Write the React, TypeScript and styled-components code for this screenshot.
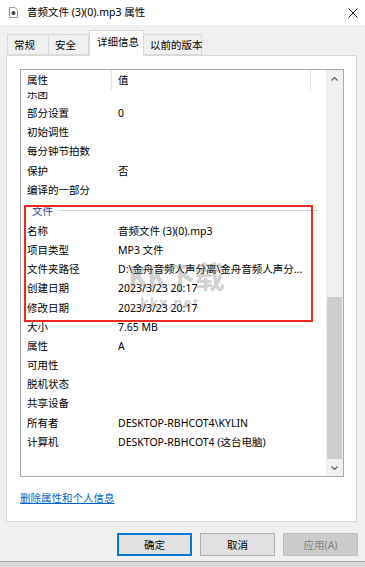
import { FC } from "react";
import styled, { createGlobalStyle } from "styled-components";

const GlobalStyle = createGlobalStyle`
  html, body {
    margin: 0;
    padding: 0;
    background: #f0f0f0;
  }
  body {
    font-family: "Noto Sans", "Noto Sans CJK SC", sans-serif;
    font-size: 10.5px;
    color: #000;
  }
`;

interface Row {
  label: string;
  value?: string;
}

const musicRows: Row[] = [
  { label: "乐团" },
  { label: "部分设置", value: "0" },
  { label: "初始调性" },
  { label: "每分钟节拍数" },
  { label: "保护", value: "否" },
  { label: "编译的一部分" },
];

const fileRows: Row[] = [
  { label: "名称", value: "音频文件 (3)(0).mp3" },
  { label: "项目类型", value: "MP3 文件" },
  { label: "文件夹路径", value: "D:\\金舟音频人声分离\\金舟音频人声分..." },
  { label: "创建日期", value: "2023/3/23 20:17" },
  { label: "修改日期", value: "2023/3/23 20:17" },
  { label: "大小", value: "7.65 MB" },
  { label: "属性", value: "A" },
  { label: "可用性" },
  { label: "脱机状态" },
  { label: "共享设备" },
  { label: "所有者", value: "DESKTOP-RBHCOT4\\KYLIN" },
  { label: "计算机", value: "DESKTOP-RBHCOT4 (这台电脑)" },
];

const tabs = [
  { name: "常规", width: 42 },
  { name: "安全", width: 41 },
  { name: "详细信息", width: 55, active: true },
  { name: "以前的版本", width: 59 },
];

const FileIcon: FC = () => (
  <svg width="9" height="11" viewBox="0 0 9 11">
    <path d="M0.5 0.5 H6 L8.5 3 V10.5 H0.5 Z" fill="#fff" stroke="#9a9a9a" />
    <circle cx="4.5" cy="6" r="2" fill="#3c3c46" />
    <circle cx="4.5" cy="6" r="0.6" fill="#c85050" />
  </svg>
);

const CloseIcon: FC = () => (
  <svg width="10" height="10" viewBox="0 0 10 10">
    <path d="M0.5 0.5 L9.5 9.5 M9.5 0.5 L0.5 9.5" stroke="#111" strokeWidth="1" />
  </svg>
);

const Chevron: FC<{ up?: boolean }> = ({ up }) => (
  <svg width="7" height="4" viewBox="0 0 7 4">
    <path
      d={up ? "M0.5 3.5 L3.5 0.5 L6.5 3.5" : "M0.5 0.5 L3.5 3.5 L6.5 0.5"}
      fill="none"
      stroke="#606060"
      strokeWidth="1.2"
    />
  </svg>
);

const DetailRow: FC<Row> = ({ label, value }) => (
  <ListRow>
    <Cell>{label}</Cell>
    <Cell>{value}</Cell>
  </ListRow>
);

const App: FC = () => {
  return (
    <Window>
      <GlobalStyle />
      <TitleBar>
        <TitleIcon>
          <FileIcon />
        </TitleIcon>
        <TitleText>音频文件 (3)(0).mp3 属性</TitleText>
        <CloseButton>
          <CloseIcon />
        </CloseButton>
      </TitleBar>

      <TabStrip>
        {tabs.map((t) => (
          <Tab key={t.name} $width={t.width} $active={!!t.active}>
            {t.name}
          </Tab>
        ))}
      </TabStrip>

      <Panel>
        <ListBox>
          <ListContent>
            <HeaderRow>
              <HeaderCell>属性</HeaderCell>
              <HeaderCell>值</HeaderCell>
            </HeaderRow>
            <ListBody>
              <Scrolled>
                {musicRows.map((r) => (
                  <DetailRow key={r.label} {...r} />
                ))}
                <GroupHeader>
                  <span>文件</span>
                  <GroupLine />
                </GroupHeader>
                {fileRows.map((r) => (
                  <DetailRow key={r.label} {...r} />
                ))}
              </Scrolled>
            </ListBody>
          </ListContent>
          <ScrollBar>
            <ScrollArrow>
              <Chevron up />
            </ScrollArrow>
            <ScrollTrack />
            <ScrollThumb />
            <ScrollArrow>
              <Chevron />
            </ScrollArrow>
          </ScrollBar>
        </ListBox>
        <RemoveLink>删除属性和个人信息</RemoveLink>
      </Panel>

      <ButtonRow>
        <Button $primary>确定</Button>
        <Button>取消</Button>
        <Button $disabled>应用(A)</Button>
      </ButtonRow>
      <BottomEdge />

      <Watermark>
        <div className="big">KK下载</div>
        <div className="small">kkx.net</div>
      </Watermark>
      <Highlight />
    </Window>
  );
};

export default App;

const Window = styled.div`
  position: relative;
  width: 365px;
  height: 567px;
  display: flex;
  flex-direction: column;
  background: #f0f0f0;
  overflow: hidden;
`;

const TitleBar = styled.div`
  height: 25px;
  background: #fff;
  display: flex;
  align-items: center;
  padding-left: 9px;
  padding-right: 6px;
`;

const TitleIcon = styled.div`
  display: flex;
  width: 18px;
`;

const TitleText = styled.div`
  flex: 1;
  font-size: 10.5px;
  color: #000;
  line-height: 25px;
`;

const CloseButton = styled.div`
  display: flex;
  align-items: center;
  justify-content: center;
  width: 12px;
  height: 25px;
`;

const TabStrip = styled.div`
  height: 30px;
  display: flex;
  align-items: flex-end;
  padding-left: 7px;
  position: relative;
  z-index: 1;
`;

const Tab = styled.div<{ $width: number; $active: boolean }>`
  box-sizing: border-box;
  width: ${(p) => p.$width}px;
  height: ${(p) => (p.$active ? 26 : 21)}px;
  margin-bottom: ${(p) => (p.$active ? -1 : 0)}px;
  padding-left: ${(p) => (p.$active ? 7 : 6)}px;
  padding-bottom: ${(p) => (p.$active ? 4 : 0)}px;
  background: ${(p) => (p.$active ? "#fff" : "#f0f0f0")};
  border: 1px solid #d9d9d9;
  border-bottom: ${(p) => (p.$active ? "none" : "1px solid #d9d9d9")};
  margin-left: ${(p) => (p.$active ? 0 : -1)}px;
  display: flex;
  align-items: center;
  font-size: 10.5px;
  color: #000;
  white-space: nowrap;
  &:first-child {
    margin-left: 0;
  }
`;

const Panel = styled.div`
  box-sizing: border-box;
  margin: 0 8px 0 6px;
  height: 467px;
  background: #fff;
  border: 1px solid #d9d9d9;
  padding: 13px 0 0 13px;
`;

const ListBox = styled.div`
  box-sizing: border-box;
  width: 324px;
  height: 408px;
  border: 1px solid #a9a9b2;
  display: flex;
  background: #fff;
`;

const ListContent = styled.div`
  flex: 1;
  display: flex;
  flex-direction: column;
  overflow: hidden;
`;

const HeaderRow = styled.div`
  height: 22px;
  display: grid;
  grid-template-columns: 91px 199px;
  position: relative;
  z-index: 1;
  background: #fff;
`;

const HeaderCell = styled.div`
  padding-left: 6px;
  line-height: 20px;
  font-size: 10.5px;
  border-right: 1px solid #e5e5e5;
  margin-bottom: 3px;
`;

const ListBody = styled.div`
  flex: 1;
  overflow: hidden;
`;

const Scrolled = styled.div`
  margin-top: -7px;
`;

const ListRow = styled.div`
  height: 19.17px;
  display: grid;
  grid-template-columns: 91px 199px;
  line-height: 19.17px;
`;

const Cell = styled.div`
  padding-left: 6px;
  font-size: 10.5px;
  color: #000;
  white-space: nowrap;
  overflow: hidden;
`;

const GroupHeader = styled.div`
  height: 22px;
  display: flex;
  align-items: center;
  padding-left: 11px;
  padding-right: 8px;
  color: #1f3d99;
  font-size: 10.5px;
`;

const GroupLine = styled.div`
  flex: 1;
  height: 1px;
  margin-left: 5px;
  background: #c9d5ea;
`;

const ScrollBar = styled.div`
  width: 17px;
  display: flex;
  flex-direction: column;
  background: #f0f0f0;
`;

const ScrollArrow = styled.div`
  height: 17px;
  display: flex;
  align-items: center;
  justify-content: center;
`;

const ScrollTrack = styled.div`
  flex: 1;
`;

const ScrollThumb = styled.div`
  height: 162px;
  margin: 0 1px;
  background: #cdcdcd;
`;

const RemoveLink = styled.div`
  margin-top: 13px;
  font-size: 10.5px;
  line-height: 16px;
  color: #0066cc;
  text-decoration: underline;
`;

const ButtonRow = styled.div`
  display: flex;
  justify-content: flex-end;
  gap: 8px;
  padding: 11px 7px 0 0;
`;

const Button = styled.div<{ $primary?: boolean; $disabled?: boolean }>`
  box-sizing: border-box;
  width: 75px;
  height: 23px;
  display: flex;
  align-items: center;
  justify-content: center;
  font-size: 10.5px;
  background: ${(p) => (p.$disabled ? "#cccccc" : "#e1e1e1")};
  color: ${(p) => (p.$disabled ? "#838383" : "#000")};
  border: 1px solid
    ${(p) => (p.$primary ? "#0078d7" : p.$disabled ? "#bfbfbf" : "#adadad")};
  box-shadow: ${(p) => (p.$primary ? "inset 0 0 0 1px #0078d7" : "none")};
`;

const BottomEdge = styled.div`
  margin-top: auto;
  height: 5px;
  border-top: 1px solid #a0a0a0;
  background: #d8d8d8;
`;

const Watermark = styled.div`
  position: absolute;
  left: 128px;
  top: 258px;
  color: rgba(110, 110, 110, 0.32);
  font-family: "Noto Sans", "Noto Sans CJK SC", sans-serif;
  font-weight: 700;
  pointer-events: none;
  .big {
    font-size: 30px;
    line-height: 38px;
    letter-spacing: -1px;
  }
  .small {
    font-size: 14px;
    line-height: 14px;
    margin-left: 12px;
    letter-spacing: 1px;
  }
`;

const Highlight = styled.div`
  position: absolute;
  left: 24px;
  top: 205px;
  width: 289px;
  height: 117px;
  box-sizing: border-box;
  border: 2px solid #ef2b1e;
  pointer-events: none;
`;
